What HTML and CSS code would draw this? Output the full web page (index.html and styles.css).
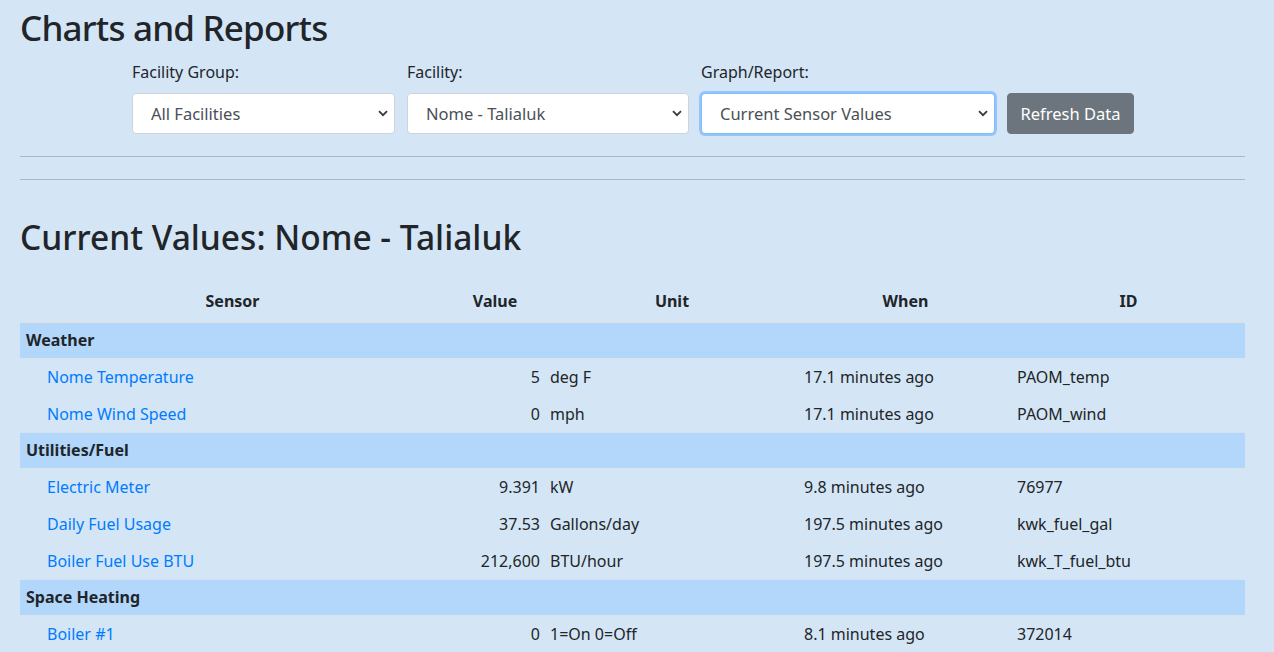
FILE: index.html
```html
<!DOCTYPE html>
<html lang="en">
<head>
<meta charset="utf-8">
<title>Charts and Reports</title>
<link rel="stylesheet" href="styles.css">
</head>
<body>
<div class="page">
  <h1 class="title">Charts and Reports</h1>
  <form class="controls">
    <div class="field field-group">
      <label class="label">Facility Group:</label>
      <select class="select"><option>All Facilities</option></select>
    </div>
    <div class="field field-facility">
      <label class="label">Facility:</label>
      <select class="select"><option>Nome - Talialuk</option></select>
    </div>
    <div class="field field-report">
      <label class="label">Graph/Report:</label>
      <select class="select select-focus"><option>Current Sensor Values</option></select>
    </div>
    <div class="field field-btn">
      <button type="button" class="btn">Refresh Data</button>
    </div>
  </form>
  <hr class="rule">
  <hr class="rule rule-second">
  <h2 class="subtitle">Current Values: Nome - Talialuk</h2>
  <table class="values">
    <colgroup>
      <col class="c-sensor"><col class="c-value"><col class="c-unit"><col class="c-when"><col class="c-id">
    </colgroup>
    <thead>
      <tr><th>Sensor</th><th>Value</th><th>Unit</th><th>When</th><th>ID</th></tr>
    </thead>
    <tbody>
      <tr class="group"><td colspan="5">Weather</td></tr>
      <tr><td class="sensor"><a href="#">Nome Temperature</a></td><td class="num">5</td><td>deg F</td><td>17.1 minutes ago</td><td>PAOM_temp</td></tr>
      <tr><td class="sensor"><a href="#">Nome Wind Speed</a></td><td class="num">0</td><td>mph</td><td>17.1 minutes ago</td><td>PAOM_wind</td></tr>
      <tr class="group"><td colspan="5">Utilities/Fuel</td></tr>
      <tr><td class="sensor"><a href="#">Electric Meter</a></td><td class="num">9.391</td><td>kW</td><td>9.8 minutes ago</td><td>76977</td></tr>
      <tr><td class="sensor"><a href="#">Daily Fuel Usage</a></td><td class="num">37.53</td><td>Gallons/day</td><td>197.5 minutes ago</td><td>kwk_fuel_gal</td></tr>
      <tr><td class="sensor"><a href="#">Boiler Fuel Use BTU</a></td><td class="num">212,600</td><td>BTU/hour</td><td>197.5 minutes ago</td><td>kwk_T_fuel_btu</td></tr>
      <tr class="group"><td colspan="5">Space Heating</td></tr>
      <tr><td class="sensor"><a href="#">Boiler #1</a></td><td class="num">0</td><td>1=On 0=Off</td><td>8.1 minutes ago</td><td>372014</td></tr>
    </tbody>
  </table>
</div>
</body>
</html>
```
FILE: styles.css
```css
html, body {
  margin: 0;
  padding: 0;
  background: #d4e6f5;
}
body {
  font-family: "Noto Sans", "Open Sans", sans-serif;
  font-size: 16px;
  line-height: 24px;
  color: #212529;
}
.page {
  padding: 0 29px 0 20px;
}
.title {
  margin: 4px 0 0 0;
  font-size: 35px;
  line-height: 48px;
  font-weight: 500;
  letter-spacing: -0.8px;
}
.controls {
  display: flex;
  align-items: flex-end;
  gap: 12px;
  margin: 8px 0 0 112px;
}
.field {
  display: flex;
  flex-direction: column;
}
.field-group { width: 263px; }
.field-facility { width: 282px; }
.field-report { width: 294px; }
.label {
  display: block;
  margin-bottom: 9px;
  font-size: 16px;
  line-height: 24px;
}
.select {
  appearance: none;
  -webkit-appearance: none;
  height: 41px;
  box-sizing: border-box;
  padding: 0 30px 0 18px;
  font-family: inherit;
  font-size: 16.5px;
  color: #495057;
  background-color: #fff;
  background-image: url("data:image/svg+xml,%3Csvg xmlns='http://www.w3.org/2000/svg' width='10' height='7' viewBox='0 0 10 7'%3E%3Cpath d='M1 1.2l4 4 4-4' fill='none' stroke='%23343a40' stroke-width='1.8'/%3E%3C/svg%3E");
  background-repeat: no-repeat;
  background-position: right 6px center;
  background-size: 10px 7px;
  border: 1px solid #ced4da;
  border-radius: 4px;
}
.select-focus {
  border-color: #80bdff;
  box-shadow: 0 0 0 2px rgba(0, 123, 255, 0.3);
  outline: none;
}
.btn {
  height: 41px;
  width: 127px;
  font-family: inherit;
  font-size: 16.5px;
  color: #fff;
  background: #6c757d;
  border: 1px solid #6c757d;
  border-radius: 4px;
  padding: 0;
}
.rule {
  margin: 22px 0 0 0;
  border: 0;
  border-top: 1px solid #a9b8c5;
  height: 0;
}
.rule-second {
  margin-top: 22px;
}
.subtitle {
  margin: 37px 0 0 0;
  font-size: 33.5px;
  line-height: 40px;
  font-weight: 500;
}
.values {
  margin-top: 24px;
  width: 1225px;
  border-collapse: collapse;
  table-layout: fixed;
}
.c-sensor { width: 425px; }
.c-value { width: 100px; }
.c-unit { width: 254px; }
.c-when { width: 213px; }
.c-id { width: 233px; }
.values th {
  font-weight: 700;
  text-align: center;
  padding: 7px 6px 8px;
  border-top: 1px solid #dee2e6;
  border-bottom: 2px solid #dee2e6;
}
.values td {
  padding: 6px 5px 6px 5px;
  border-top: 1px solid #d9e3ec;
  text-align: left;
  white-space: nowrap;
}
.values td.sensor {
  padding-left: 27px;
}
.values td.num {
  text-align: right;
}
.values tr.group td {
  background: #b3d7fb;
  font-weight: 700;
  padding: 5px 6px 6px;
  border-top: 1px solid #d1e2f1;
}
.values a {
  color: #007bff;
  text-decoration: none;
}
```
